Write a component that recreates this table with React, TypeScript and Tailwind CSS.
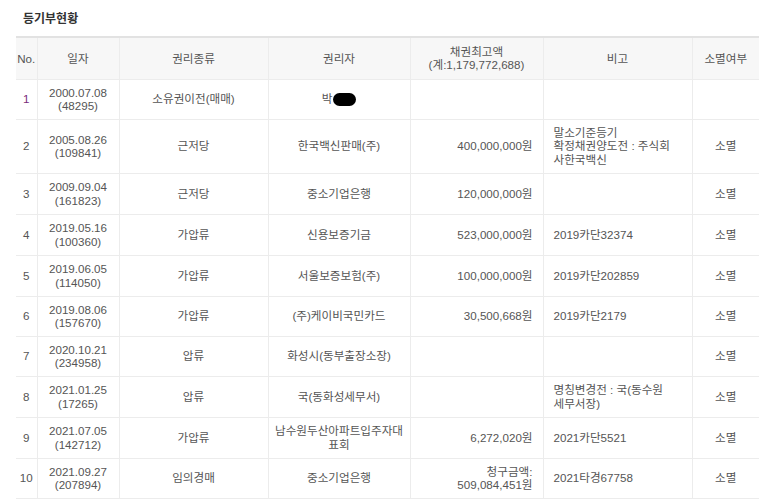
import React from "react";

type Row = {
  no: string;
  date: string;
  rcp: string;
  kind: string;
  holder: React.ReactNode;
  amount: React.ReactNode;
  note: React.ReactNode;
  ext: string;
  h: string;
};

const Blob = () => (
  <span className="inline-block align-middle w-[23px] h-[13px] rounded-[7px] bg-black ml-[1px] -mt-[2px]" />
);

const rows: Row[] = [
  { no: "1", date: "2000.07.08", rcp: "(48295)", kind: "소유권이전(매매)", holder: <>박<Blob /></>, amount: "", note: "", ext: "", h: "h-[40px]" },
  {
    no: "2", date: "2005.08.26", rcp: "(109841)", kind: "근저당", holder: "한국백신판매(주)", amount: "400,000,000원",
    note: <>말소기준등기<br />확정채권양도전 : 주식회<br />사한국백신</>, ext: "소멸", h: "h-[54px]",
  },
  { no: "3", date: "2009.09.04", rcp: "(161823)", kind: "근저당", holder: "중소기업은행", amount: "120,000,000원", note: "", ext: "소멸", h: "h-[41px]" },
  { no: "4", date: "2019.05.16", rcp: "(100360)", kind: "가압류", holder: "신용보증기금", amount: "523,000,000원", note: "2019카단32374", ext: "소멸", h: "h-[41px]" },
  { no: "5", date: "2019.06.05", rcp: "(114050)", kind: "가압류", holder: "서울보증보험(주)", amount: "100,000,000원", note: "2019카단202859", ext: "소멸", h: "h-[41px]" },
  { no: "6", date: "2019.08.06", rcp: "(157670)", kind: "가압류", holder: "(주)케이비국민카드", amount: "30,500,668원", note: "2019카단2179", ext: "소멸", h: "h-[40px]" },
  { no: "7", date: "2020.10.21", rcp: "(234958)", kind: "압류", holder: "화성시(동부출장소장)", amount: "", note: "", ext: "소멸", h: "h-[40px]" },
  { no: "8", date: "2021.01.25", rcp: "(17265)", kind: "압류", holder: "국(동화성세무서)", amount: "", note: <>명칭변경전 : 국(동수원<br />세무서장)</>, ext: "소멸", h: "h-[41px]" },
  { no: "9", date: "2021.07.05", rcp: "(142712)", kind: "가압류", holder: <>남수원두산아파트입주자대<br />표회</>, amount: "6,272,020원", note: "2021카단5521", ext: "소멸", h: "h-[41px]" },
  { no: "10", date: "2021.09.27", rcp: "(207894)", kind: "임의경매", holder: "중소기업은행", amount: <>청구금액:<br />509,084,451원</>, note: "2021타경67758", ext: "소멸", h: "h-[40px]" },
];

export default function App() {
  return (
    <div
      className="w-[773px] h-[504px] bg-white overflow-hidden text-[#555]"
      style={{ fontFamily: '"Liberation Sans", "Noto Sans CJK KR", sans-serif' }}
    >
      <div className="pl-[23px] pt-[11px] h-[36px] text-[12px] font-bold text-[#333] leading-[16px]">등기부현황</div>
      <table className="ml-[16px] w-[743px] border-collapse table-fixed text-[11.6px] leading-[13.5px]">
        <colgroup>
          <col className="w-[21px]" />
          <col className="w-[82px]" />
          <col className="w-[149px]" />
          <col className="w-[142px]" />
          <col className="w-[133px]" />
          <col className="w-[149px]" />
          <col className="w-[67px]" />
        </colgroup>
        <thead>
          <tr className="h-[42px] bg-[#f7f7f7] border-t-2 border-t-[#e2e2e2] border-b border-b-[#ececec]">
            <th className="font-normal text-center p-0">No.</th>
            <th className="font-normal text-center p-0 border-l border-[#ececec]">일자</th>
            <th className="font-normal text-center p-0 border-l border-[#ececec]">권리종류</th>
            <th className="font-normal text-center p-0 border-l border-[#ececec]">권리자</th>
            <th className="font-normal text-center p-0 border-l border-[#ececec]">
              채권최고액
              <br />
              (계:1,179,772,688)
            </th>
            <th className="font-normal text-center p-0 border-l border-[#ececec]">비고</th>
            <th className="font-normal text-center p-0 border-l border-[#ececec]">소멸여부</th>
          </tr>
        </thead>
        <tbody>
          {rows.map((r) => (
            <tr key={r.no} className={`${r.h} border-b border-[#ececec]`}>
              <td className={`text-center p-0 ${r.no === "1" ? "text-[#7a2a7a]" : ""}`}>{r.no}</td>
              <td className="text-center p-0 border-l border-[#ececec]">
                {r.date}
                <br />
                {r.rcp}
              </td>
              <td className="text-center p-0 border-l border-[#ececec]">{r.kind}</td>
              <td className="text-center p-0 border-l border-[#ececec]">{r.holder}</td>
              <td className="text-right py-0 pr-[10px] border-l border-[#ececec]">{r.amount}</td>
              <td className="text-left py-0 pl-[10px] border-l border-[#ececec]">{r.note}</td>
              <td className="text-center p-0 border-l border-[#ececec]">{r.ext}</td>
            </tr>
          ))}
        </tbody>
      </table>
    </div>
  );
}
